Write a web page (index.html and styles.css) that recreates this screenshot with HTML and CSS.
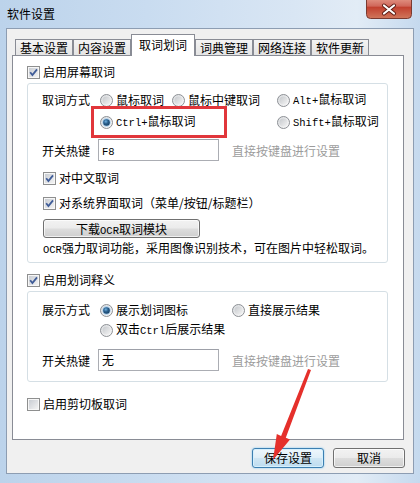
FILE: index.html
```html
<!DOCTYPE html>
<html>
<head>
<meta charset="utf-8">
<link rel="stylesheet" href="styles.css">
</head>
<body>
<div class="window">
  <svg class="defs" width="0" height="0">
    <defs>
      <linearGradient id="rg" x1="0" y1="0" x2="1" y2="1">
        <stop offset="0" stop-color="#d9dbde"/>
        <stop offset="1" stop-color="#fbfbfb"/>
      </linearGradient>
      <linearGradient id="ri" x1="0" y1="0" x2="1" y2="1">
        <stop offset="0" stop-color="#c6c9cd"/>
        <stop offset="1" stop-color="#f3f3f3"/>
      </linearGradient>
      <radialGradient id="rdot" cx="0.4" cy="0.35" r="0.75">
        <stop offset="0" stop-color="#6fb0e0"/>
        <stop offset="0.45" stop-color="#2a5f8c"/>
        <stop offset="1" stop-color="#143b5e"/>
      </radialGradient>
      <linearGradient id="cg" x1="0" y1="0" x2="1" y2="1">
        <stop offset="0" stop-color="#c9cdd3"/>
        <stop offset="1" stop-color="#f3f3f3"/>
      </linearGradient>
      <linearGradient id="closeg" x1="0" y1="0" x2="0" y2="1">
        <stop offset="0" stop-color="#e8a393"/>
        <stop offset="0.45" stop-color="#d0675a"/>
        <stop offset="0.5" stop-color="#c2402f"/>
        <stop offset="1" stop-color="#d0775c"/>
      </linearGradient>
    </defs>
  </svg>

  <div class="titlebar">
    <span class="title">软件设置</span>
    <div class="close">
      <svg width="46" height="19" viewBox="0 0 46 19">
        <rect x="0.5" y="-4" width="45" height="22.5" rx="4" fill="url(#closeg)" stroke="#7a3a30"/>
        <path d="M18 5.5 L28 13.5 M28 5.5 L18 13.5" stroke="#5a1a12" stroke-width="4" stroke-linecap="round"/>
        <path d="M18 5.5 L28 13.5 M28 5.5 L18 13.5" stroke="#ffffff" stroke-width="2.2" stroke-linecap="round"/>
      </svg>
    </div>
  </div>

  <div class="client">
    <div class="tabstrip">
      <div class="tab">基本设置</div>
      <div class="tab">内容设置</div>
      <div class="tab sel">取词划词</div>
      <div class="tab">词典管理</div>
      <div class="tab">网络连接</div>
      <div class="tab">软件更新</div>
    </div>

    <div class="panel">
      <div class="chk">
        <svg class="ci" viewBox="0 0 13 13"><rect x=".5" y=".5" width="12" height="12" fill="#f7f7f7" stroke="#8e8f8f"/><rect x="2" y="2" width="9" height="9" fill="url(#cg)"/><path d="M3.2 6.3 L5.4 9 L10 3.4" fill="none" stroke="#3f5c98" stroke-width="1.8"/></svg>
        <span>启用屏幕取词</span>
      </div>

      <div class="group g1">
        <div class="opts opts1">
          <span class="lbl">取词方式</span>
          <span class="rad"><svg class="ri" viewBox="0 0 13 13"><circle cx="6.5" cy="6.5" r="6" fill="url(#rg)" stroke="#8d9095"/><circle cx="6.5" cy="6.5" r="4" fill="url(#ri)"/></svg><span>鼠标取词</span></span>
          <span class="rad"><svg class="ri" viewBox="0 0 13 13"><circle cx="6.5" cy="6.5" r="6" fill="url(#rg)" stroke="#8d9095"/><circle cx="6.5" cy="6.5" r="4" fill="url(#ri)"/></svg><span>鼠标中键取词</span></span>
          <span class="rad"><svg class="ri" viewBox="0 0 13 13"><circle cx="6.5" cy="6.5" r="6" fill="url(#rg)" stroke="#8d9095"/><circle cx="6.5" cy="6.5" r="4" fill="url(#ri)"/></svg><span><span class="m">Alt+</span>鼠标取词</span></span>
          <span class="rad wide"><svg class="ri" viewBox="0 0 13 13"><circle cx="6.5" cy="6.5" r="6" fill="url(#rg)" stroke="#8d9095"/><circle cx="6.5" cy="6.5" r="4.2" fill="#a9cdec"/><circle cx="6.5" cy="6.5" r="3.3" fill="url(#rdot)"/></svg><span><span class="m">Ctrl+</span>鼠标取词</span></span>
          <span class="rad"><svg class="ri" viewBox="0 0 13 13"><circle cx="6.5" cy="6.5" r="6" fill="url(#rg)" stroke="#8d9095"/><circle cx="6.5" cy="6.5" r="4" fill="url(#ri)"/></svg><span><span class="m">Shift+</span>鼠标取词</span></span>
        </div>
        <div class="hotkey hk1">
          <span class="hlbl">开关热键</span>
          <span class="input"><span class="m">F8</span></span>
          <span class="hint">直接按键盘进行设置</span>
        </div>
        <div class="chk sub c1">
          <svg class="ci" viewBox="0 0 13 13"><rect x=".5" y=".5" width="12" height="12" fill="#f7f7f7" stroke="#8e8f8f"/><rect x="2" y="2" width="9" height="9" fill="url(#cg)"/><path d="M3.2 6.3 L5.4 9 L10 3.4" fill="none" stroke="#3f5c98" stroke-width="1.8"/></svg>
          <span>对中文取词</span>
        </div>
        <div class="chk sub c2">
          <svg class="ci" viewBox="0 0 13 13"><rect x=".5" y=".5" width="12" height="12" fill="#f7f7f7" stroke="#8e8f8f"/><rect x="2" y="2" width="9" height="9" fill="url(#cg)"/><path d="M3.2 6.3 L5.4 9 L10 3.4" fill="none" stroke="#3f5c98" stroke-width="1.8"/></svg>
          <span>对系统界面取词（菜单/按钮/标题栏）</span>
        </div>
        <div class="btn ocrbtn">下载<span class="m">OCR</span>取词模块</div>
        <div class="ocrtext"><span class="m">OCR</span>强力取词功能，采用图像识别技术，可在图片中轻松取词。</div>
      </div>

      <div class="chk gap2">
        <svg class="ci" viewBox="0 0 13 13"><rect x=".5" y=".5" width="12" height="12" fill="#f7f7f7" stroke="#8e8f8f"/><rect x="2" y="2" width="9" height="9" fill="url(#cg)"/><path d="M3.2 6.3 L5.4 9 L10 3.4" fill="none" stroke="#3f5c98" stroke-width="1.8"/></svg>
        <span>启用划词释义</span>
      </div>

      <div class="group g2">
        <div class="opts opts2">
          <span class="lbl">展示方式</span>
          <span class="rad"><svg class="ri" viewBox="0 0 13 13"><circle cx="6.5" cy="6.5" r="6" fill="url(#rg)" stroke="#8d9095"/><circle cx="6.5" cy="6.5" r="4.2" fill="#a9cdec"/><circle cx="6.5" cy="6.5" r="3.3" fill="url(#rdot)"/></svg><span>展示划词图标</span></span>
          <span class="rad"><svg class="ri" viewBox="0 0 13 13"><circle cx="6.5" cy="6.5" r="6" fill="url(#rg)" stroke="#8d9095"/><circle cx="6.5" cy="6.5" r="4" fill="url(#ri)"/></svg><span>直接展示结果</span></span>
          <span class="rad wide"><svg class="ri" viewBox="0 0 13 13"><circle cx="6.5" cy="6.5" r="6" fill="url(#rg)" stroke="#8d9095"/><circle cx="6.5" cy="6.5" r="4" fill="url(#ri)"/></svg><span>双击<span class="m">Ctrl</span>后展示结果</span></span>
        </div>
        <div class="hotkey hk2">
          <span class="hlbl">开关热键</span>
          <span class="input">无</span>
          <span class="hint">直接按键盘进行设置</span>
        </div>
      </div>

      <div class="chk gap3">
        <svg class="ci" viewBox="0 0 13 13"><rect x=".5" y=".5" width="12" height="12" fill="#f7f7f7" stroke="#8e8f8f"/><rect x="2" y="2" width="9" height="9" fill="url(#cg)"/></svg>
        <span>启用剪切板取词</span>
      </div>
    </div>

    <div class="buttons">
      <div class="btn def">保存设置</div>
      <div class="btn">取消</div>
    </div>
  </div>

  <div class="redbox"></div>
  <svg class="arrow" width="420" height="483" viewBox="0 0 420 483">
    <polygon points="308,369 311,370 285.8,437.8 290,439.6 273,460 276.8,434.1 281.1,435.9" fill="#e5302b"/>
  </svg>
</div>
</body>
</html>
```

FILE: styles.css
```css
html, body {
  margin: 0;
  padding: 0;
}
body {
  font-family: "Noto Sans CJK SC", "Noto Sans", sans-serif;
  font-size: 12px;
  color: #000;
}
.defs {
  position: absolute;
  width: 0;
  height: 0;
}
.m {
  font-family: "Liberation Mono", monospace;
  font-size: 10.5px;
}
.window {
  position: relative;
  width: 420px;
  height: 483px;
  overflow: hidden;
  background: linear-gradient(90deg, #bcd3eb 0%, #c9dcf0 35%, #d9e6f4 70%, #e2ecf6 85%, #c5d9ee 100%);
  display: flex;
  flex-direction: column;
}
.titlebar {
  height: 28px;
  flex: none;
  display: flex;
  justify-content: space-between;
  align-items: flex-start;
}
.title {
  margin: 6px 0 0 7px;
  line-height: 16px;
}
.close {
  width: 46px;
  height: 19px;
  margin-right: 8px;
}
.close svg {
  display: block;
}
.client {
  flex: none;
  margin: 0 6px;
  height: 446px;
  box-sizing: border-box;
  border: 1px solid #8d9db2;
  background: #f0f0f0;
  display: flex;
  flex-direction: column;
}
.tabstrip {
  display: flex;
  align-items: flex-end;
  height: 21px;
  margin-top: 5px;
  padding-left: 8px;
}
.tab {
  box-sizing: border-box;
  width: 58px;
  height: 16px;
  border: 1px solid #898c95;
  border-bottom: none;
  background: linear-gradient(#f4f4f4, #e4e4e4);
  text-align: center;
  line-height: 15px;
  white-space: nowrap;
}
.tab.sel {
  width: 64px;
  height: 22px;
  margin-bottom: -1px;
  padding-top: 1px;
  line-height: 18px;
  background: #fff;
  position: relative;
  z-index: 1;
}
.panel {
  margin: 0 9px 0 5px;
  height: 385px;
  box-sizing: border-box;
  border: 1px solid #898c95;
  background: #fff;
  padding: 8px 15px 0 14px;
}
.chk {
  display: flex;
  align-items: center;
  gap: 3px;
  height: 16px;
  line-height: 16px;
  white-space: nowrap;
}
.ci, .ri {
  width: 13px;
  height: 13px;
  flex: none;
  display: block;
}
.group {
  border: 1px solid #d5dfe5;
  border-radius: 3px;
  margin-top: 3px;
}
.g1 {
  padding: 8px 14px 4px 14px;
}
.g2 {
  padding: 10px 14px 10px 14px;
}
.opts {
  display: grid;
  grid-auto-rows: 16px;
  align-items: center;
}
.opts1 {
  grid-template-columns: 58px 72px 105px auto;
  row-gap: 6px;
}
.opts2 {
  grid-template-columns: 58px 132px auto;
  row-gap: 4px;
}
.lbl {
  line-height: 16px;
}
.rad {
  display: flex;
  align-items: center;
  gap: 3px;
  line-height: 16px;
  white-space: nowrap;
}
.opts1 .wide {
  grid-column: 2 / span 2;
}
.opts2 .wide {
  grid-column: 2 / span 2;
}
.hotkey {
  display: flex;
  align-items: center;
  height: 22px;
}
.hk1 {
  margin-top: 9px;
}
.hk2 {
  margin-top: 11px;
}
.hlbl {
  width: 56px;
  flex: none;
}
.input {
  box-sizing: border-box;
  width: 121px;
  height: 22px;
  border: 1px solid #abadb3;
  border-top-color: #9da0a8;
  background: #fff;
  padding-left: 3px;
  line-height: 20px;
}
.hint {
  margin-left: 13px;
  color: #9c9c9c;
}
.sub {
  margin-left: 1px;
  margin-top: 9px;
}
.btn {
  box-sizing: border-box;
  width: 72px;
  height: 20px;
  border: 1px solid #707070;
  border-radius: 3px;
  background: linear-gradient(#f2f2f2 0%, #ebebeb 48%, #dddddd 52%, #cfcfcf 100%);
  box-shadow: inset 0 0 0 1px rgba(255, 255, 255, 0.7);
  text-align: center;
  line-height: 18px;
  white-space: nowrap;
}
.ocrbtn {
  width: 157px;
  height: 19px;
  line-height: 17px;
  margin: 8px 0 0 1px;
}
.ocrtext {
  margin: 2px 0 0 1px;
  line-height: 16px;
  white-space: nowrap;
}
.gap2 {
  margin-top: 9px;
}
.gap3 {
  margin-top: 14px;
}
.buttons {
  display: flex;
  justify-content: flex-end;
  gap: 9px;
  margin: 8px 8px 0 0;
}
.btn.def {
  border-color: #3c7fb1;
  background: linear-gradient(#eef7fc 0%, #e0eff8 48%, #cfe6f4 52%, #bddcef 100%);
  box-shadow: inset 0 0 0 1px #d6f0fd, 0 0 2px #74c3f0;
}
.redbox {
  position: absolute;
  left: 91px;
  top: 106px;
  width: 136px;
  height: 32px;
  box-sizing: border-box;
  border: 3px solid #e1363b;
}
.arrow {
  position: absolute;
  left: 0;
  top: 0;
  pointer-events: none;
}
```
